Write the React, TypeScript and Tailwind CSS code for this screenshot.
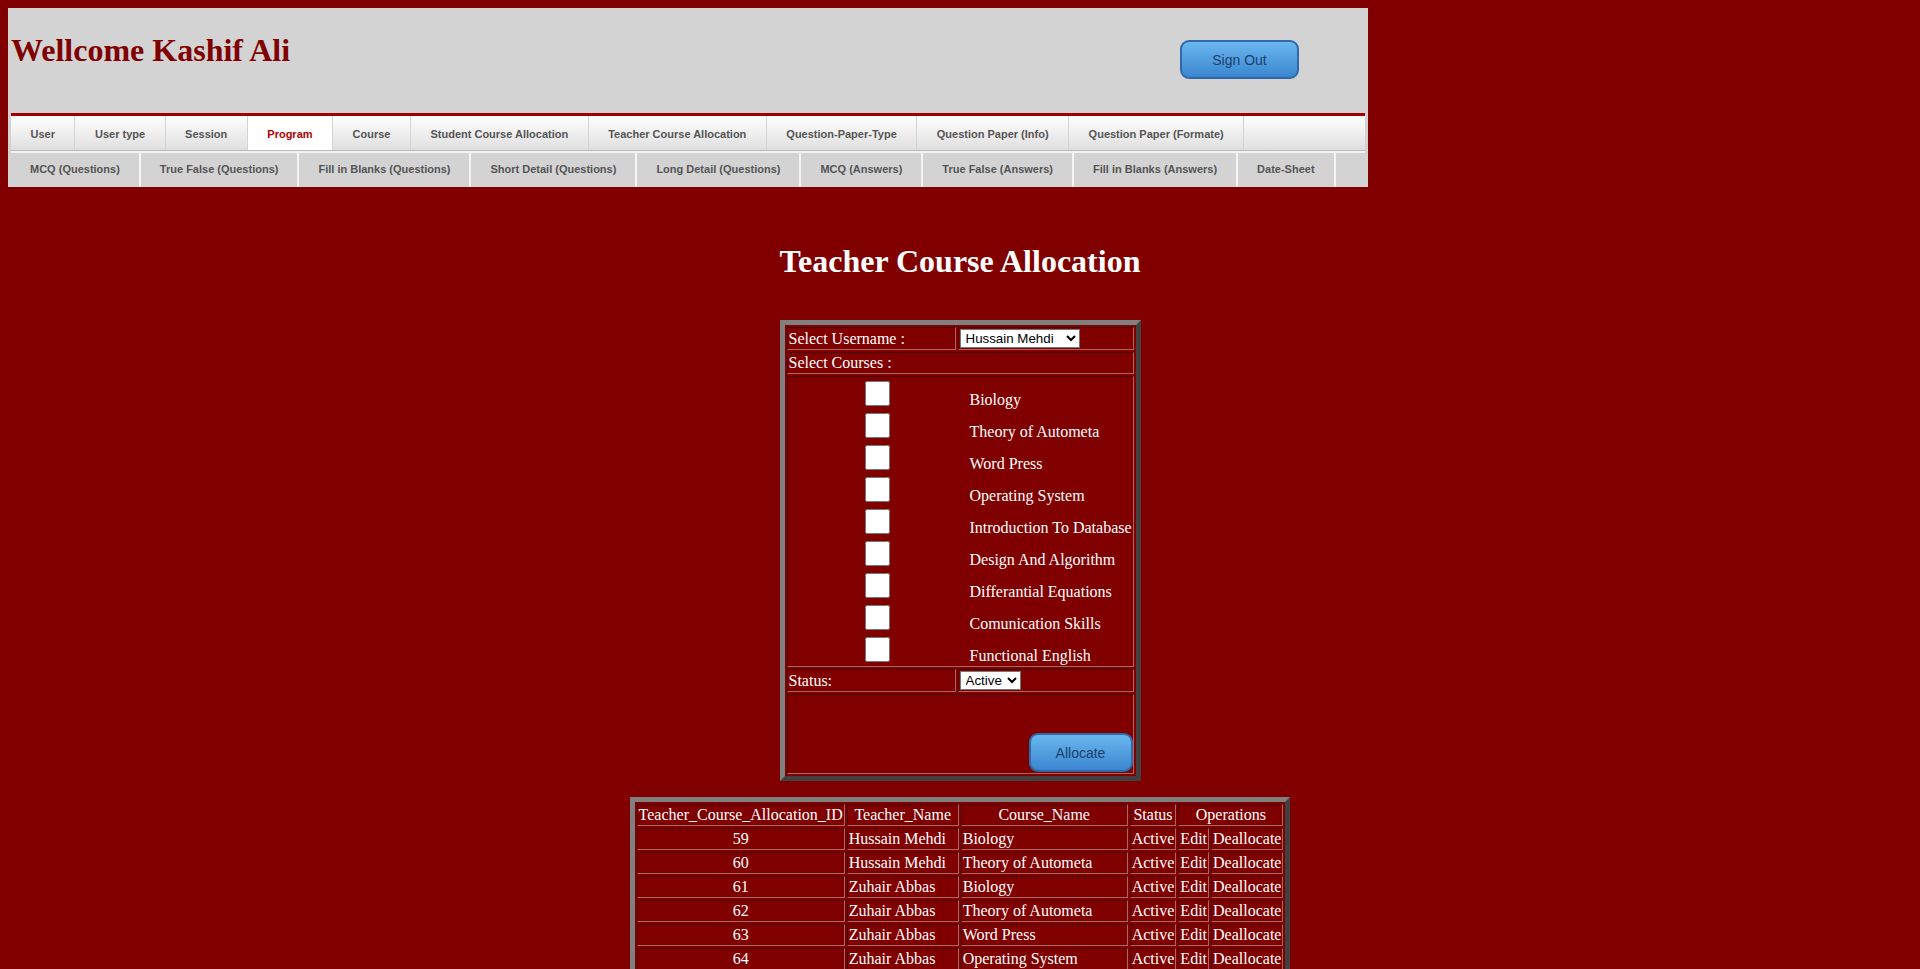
import React from "react";

const topTabs = [
  "User",
  "User type",
  "Session",
  "Program",
  "Course",
  "Student Course Allocation",
  "Teacher Course Allocation",
  "Question-Paper-Type",
  "Question Paper (Info)",
  "Question Paper (Formate)",
];

const subTabs = [
  "MCQ (Questions)",
  "True False (Questions)",
  "Fill in Blanks (Questions)",
  "Short Detail (Questions)",
  "Long Detail (Questions)",
  "MCQ (Answers)",
  "True False (Answers)",
  "Fill in Blanks (Answers)",
  "Date-Sheet",
];

const courses = [
  "Biology",
  "Theory of Autometa",
  "Word Press",
  "Operating System",
  "Introduction To Database",
  "Design And Algorithm",
  "Differantial Equations",
  "Comunication Skills",
  "Functional English",
];

const allocations = [
  { id: 59, teacher: "Hussain Mehdi", course: "Biology" },
  { id: 60, teacher: "Hussain Mehdi", course: "Theory of Autometa" },
  { id: 61, teacher: "Zuhair Abbas", course: "Biology" },
  { id: 62, teacher: "Zuhair Abbas", course: "Theory of Autometa" },
  { id: 63, teacher: "Zuhair Abbas", course: "Word Press" },
  { id: 64, teacher: "Zuhair Abbas", course: "Operating System" },
];

// inset look of the old table cells
const cell =
  "border border-t-[#4a0808] border-l-[#4a0808] border-r-[#a36a6a] border-b-[#a36a6a]";
const frame =
  "border-[5px] border-t-[#808080] border-l-[#808080] border-r-[#404040] border-b-[#404040]";
const blueBtn =
  "rounded-[9px] border-2 border-[#3169a8] bg-linear-to-b from-[#69b7ef] to-[#3b86cf] font-['Liberation_Sans',Arial,sans-serif] text-[14px] leading-[normal] text-[#1d3f6b]";
const select =
  "h-[19px] border border-[#767676] bg-white px-[1px] font-['Liberation_Sans',Arial,sans-serif] text-[13.33px] leading-[normal] text-black";

export default function App() {
  return (
    <div className="min-h-screen bg-[#800000] p-2 font-['Liberation_Serif',serif] leading-[normal] text-white">
      {/* header */}
      <div className="w-[1360px] bg-[#d3d3d3]">
        <div className="flex h-[105px] items-start justify-between">
          <h1 className="ml-[3px] mt-[24px] text-[32px] font-bold leading-[37px] text-[#800000]">
            Wellcome Kashif Ali
          </h1>
          <button className={`${blueBtn} mr-[69px] mt-[32px] h-[39px] w-[119px]`}>Sign Out</button>
        </div>

        <div className="mx-[3px] font-['Liberation_Sans',Arial,sans-serif] text-[11px] font-bold text-[#555]">
          <div className="h-[3px] bg-[#a00000]" />
          <div className="flex h-[35px] border-b border-[#b8b8b8] bg-linear-to-b from-white to-[#dfdfdf]">
            {topTabs.map((t) => (
              <span
                key={t}
                className={`flex items-center whitespace-nowrap border-r border-[#d4d4d4] px-[19.5px] pt-[2px] ${
                  t === "Program" ? "bg-white text-[#b30000]" : ""
                }`}
              >
                {t}
              </span>
            ))}
          </div>
          <div className="flex h-[36px] border-t-2 border-[#f2f2f2] bg-[#d3d3d3]">
            {subTabs.map((t) => (
              <span key={t} className="flex items-center whitespace-nowrap border-r-2 border-[#f4f4f4] px-[19px] pb-[3px]">
                {t}
              </span>
            ))}
          </div>
        </div>
      </div>

      <h1 className="mt-[56px] text-center text-[32px] font-bold leading-[37px]">Teacher Course Allocation</h1>

      {/* allocation form */}
      <div className={`${frame} mx-auto mt-[40px] grid w-[361px] grid-cols-[169px_176px] gap-[2px] p-[2px] text-[16px]`}>
        <div className={`${cell} flex h-[23px] items-center px-[1px]`}>Select Username :</div>
        <div className={`${cell} flex h-[23px] items-center px-[1px]`}>
          <select className={`${select} w-[120px]`} defaultValue="Hussain Mehdi">
            <option>Hussain Mehdi</option>
            <option>Zuhair Abbas</option>
          </select>
        </div>

        <div className={`${cell} col-span-2 flex h-[22px] items-center px-[1px]`}>Select Courses :</div>

        <div className={`${cell} col-span-2 flex h-[291px] flex-col gap-[7px] pt-[4px]`}>
          {courses.map((c) => (
            <label key={c} className="flex h-[25px] items-end">
              <input type="checkbox" className="m-0 ml-[77px] h-[25px] w-[25px] shrink-0" />
              <span className="mb-[-3px] ml-[80px] whitespace-nowrap">{c}</span>
            </label>
          ))}
        </div>

        <div className={`${cell} flex h-[23px] items-center px-[1px]`}>Status:</div>
        <div className={`${cell} flex h-[23px] items-center px-[1px]`}>
          <select className={`${select} w-[61px]`} defaultValue="Active">
            <option>Active</option>
            <option>Inactive</option>
          </select>
        </div>

        <div className={`${cell} col-span-2 flex h-[80px] items-end justify-end`}>
          <button className={`${blueBtn} mb-[1px] h-[39px] w-[104px]`}>Allocate</button>
        </div>
      </div>

      {/* allocations list */}
      <table className={`${frame} mx-auto mt-[16px] border-separate border-spacing-[2px] text-[16px] leading-[18px]`}>
        <thead>
          <tr>
            <th className={`${cell} p-[1px] font-normal`}>Teacher_Course_Allocation_ID</th>
            <th className={`${cell} w-[112px] p-[1px] font-normal`}>Teacher_Name</th>
            <th className={`${cell} w-[167px] p-[1px] font-normal`}>Course_Name</th>
            <th className={`${cell} p-[1px] font-normal`}>Status</th>
            <th colSpan={2} className={`${cell} p-[1px] font-normal`}>
              Operations
            </th>
          </tr>
        </thead>
        <tbody>
          {allocations.map((r) => (
            <tr key={r.id}>
              <td className={`${cell} p-[1px] text-center`}>{r.id}</td>
              <td className={`${cell} whitespace-nowrap p-[1px]`}>{r.teacher}</td>
              <td className={`${cell} whitespace-nowrap p-[1px]`}>{r.course}</td>
              <td className={`${cell} p-[1px]`}>Active</td>
              <td className={`${cell} p-[1px]`}>Edit</td>
              <td className={`${cell} p-[1px]`}>Deallocate</td>
            </tr>
          ))}
        </tbody>
      </table>
    </div>
  );
}
